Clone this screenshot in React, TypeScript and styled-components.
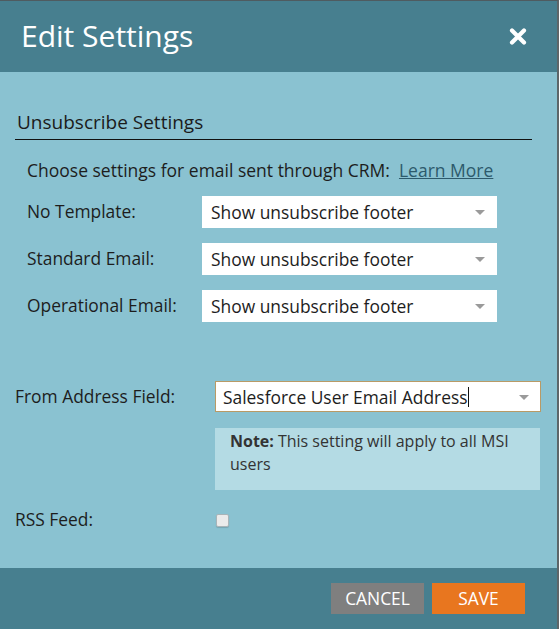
import React from 'react';
import styled, { createGlobalStyle } from 'styled-components';

const GlobalStyle = createGlobalStyle`
  html, body {
    margin: 0;
    padding: 0;
    background: #8ac2d1;
  }
  body {
    font-family: "Open Sans", "Noto Sans", Arial, sans-serif;
  }
`;

const Dialog = styled.div`
  width: 559px;
  height: 629px;
  box-sizing: border-box;
  border-top: 1px solid #4f5b60;
  border-right: 2px solid #5d6669;
  display: flex;
  flex-direction: column;
  background: #8ac2d1;
`;

const Header = styled.div`
  height: 71px;
  background: #477f8f;
  display: flex;
  align-items: center;
  justify-content: space-between;
  padding: 0 30px 0 21px;
  flex-shrink: 0;
`;

const Title = styled.h1`
  margin: 0 0 2px;
  font-size: 30px;
  font-weight: 400;
  color: #ffffff;
  line-height: 1;
`;

const CloseButton = styled.button`
  border: none;
  background: none;
  padding: 0;
  width: 18px;
  height: 17px;
  cursor: pointer;
  display: flex;
`;

const Body = styled.div`
  flex: 1;
  padding: 38px 0 0 15px;
  display: flex;
  flex-direction: column;
`;

const SectionTitle = styled.h2`
  margin: 0 25px 0 0;
  font-size: 19px;
  font-weight: 400;
  line-height: 25px;
  color: #1b1b1b;
  padding: 0 0 4px 2px;
  border-bottom: 1px solid #111;
`;

const SectionBody = styled.div`
  padding-left: 12px;
  margin-top: 18px;
  display: flex;
  flex-direction: column;
  gap: 15px;
`;

const Intro = styled.p`
  margin: 0 0 -1px;
  font-size: 17.5px;
  line-height: 24px;
  color: #1d1d1d;
`;

const Link = styled.a`
  color: #2d5a6c;
  text-decoration: underline;
  margin-left: 9px;
`;

const Row = styled.div<{ $labelWidth: number }>`
  display: grid;
  grid-template-columns: ${p => p.$labelWidth}px auto;
  align-items: center;
`;

const Label = styled.span`
  font-size: 17.4px;
  color: #1d1d1d;
  margin-top: -2px;
`;

const SelectBox = styled.div<{ $width: number; $height: number; $focused?: boolean }>`
  position: relative;
  width: ${p => p.$width}px;
  height: ${p => p.$height}px;
  box-sizing: border-box;
  background: #ffffff;
  border: 1px solid ${p => (p.$focused ? '#b99a66' : '#ffffff')};
  padding-left: ${p => (p.$focused ? 7 : 8)}px;
  display: flex;
  align-items: center;
  font-size: 17.4px;
  color: #1d1d1d;
`;

const Caret = styled.span`
  display: inline-block;
  width: 1px;
  height: 20px;
  background: #111;
  margin-left: 1px;
`;

const Arrow = styled.span`
  position: absolute;
  right: 11px;
  top: 50%;
  margin-top: -2px;
  width: 0;
  height: 0;
  border-left: 5px solid transparent;
  border-right: 5px solid transparent;
  border-top: 5px solid #9a9a9a;
`;

const FromSection = styled.div`
  margin-top: 59px;
  display: flex;
  flex-direction: column;
`;

const Note = styled.div`
  margin: 16px 0 0 200px;
  width: 325px;
  box-sizing: border-box;
  background: #b4dbe4;
  padding: 2px 15px 14px;
  font-size: 16px;
  line-height: 23px;
  color: #333333;
`;

const NoteLabel = styled.strong`
  font-weight: 700;
  margin-right: 4px;
`;

const RssRow = styled(Row)`
  margin-top: 19px;
`;

const Checkbox = styled.input`
  appearance: none;
  margin: 0 0 0 1px;
  width: 13px;
  height: 13px;
  border: 1px solid #a9b4b8;
  border-radius: 2px;
  background: #ebebeb;
  box-shadow: 0 1px 1px rgba(0, 0, 0, 0.15);
`;

const Footer = styled.div`
  height: 60px;
  background: #477f8f;
  display: flex;
  align-items: center;
  justify-content: flex-end;
  gap: 8px;
  padding: 0 32px 1px 0;
  flex-shrink: 0;
`;

const Button = styled.button<{ $primary?: boolean }>`
  width: 93px;
  height: 31px;
  border: none;
  background: ${p => (p.$primary ? '#e8761f' : '#7f7f7f')};
  color: #ffffff;
  font-family: inherit;
  font-size: 17.4px;
  padding: 0;
  cursor: pointer;
`;

const options = [
  { label: 'No Template:', value: 'Show unsubscribe footer' },
  { label: 'Standard Email:', value: 'Show unsubscribe footer' },
  { label: 'Operational Email:', value: 'Show unsubscribe footer' },
];

export default function App() {
  return (
    <>
      <GlobalStyle />
      <Dialog>
        <Header>
          <Title>Edit Settings</Title>
          <CloseButton aria-label="Close">
            <svg width="18" height="17" viewBox="0 0 18 17">
              <path d="M3 2.5 L15 14.5 M15 2.5 L3 14.5" stroke="#fff" strokeWidth="4.2" strokeLinecap="round" />
            </svg>
          </CloseButton>
        </Header>
        <Body>
          <SectionTitle>Unsubscribe Settings</SectionTitle>
          <SectionBody>
            <Intro>
              Choose settings for email sent through CRM:<Link href="#">Learn More</Link>
            </Intro>
            {options.map(o => (
              <Row key={o.label} $labelWidth={175}>
                <Label>{o.label}</Label>
                <SelectBox $width={295} $height={32}>
                  {o.value}
                  <Arrow />
                </SelectBox>
              </Row>
            ))}
          </SectionBody>
          <FromSection>
            <Row $labelWidth={200}>
              <Label>From Address Field:</Label>
              <SelectBox $width={326} $height={31} $focused>
                Salesforce User Email Address
                <Caret />
                <Arrow />
              </SelectBox>
            </Row>
            <Note>
              <NoteLabel>Note:</NoteLabel>This setting will apply to all MSI users
            </Note>
            <RssRow $labelWidth={200}>
              <Label>RSS Feed:</Label>
              <Checkbox type="checkbox" />
            </RssRow>
          </FromSection>
        </Body>
        <Footer>
          <Button>CANCEL</Button>
          <Button $primary>SAVE</Button>
        </Footer>
      </Dialog>
    </>
  );
}
